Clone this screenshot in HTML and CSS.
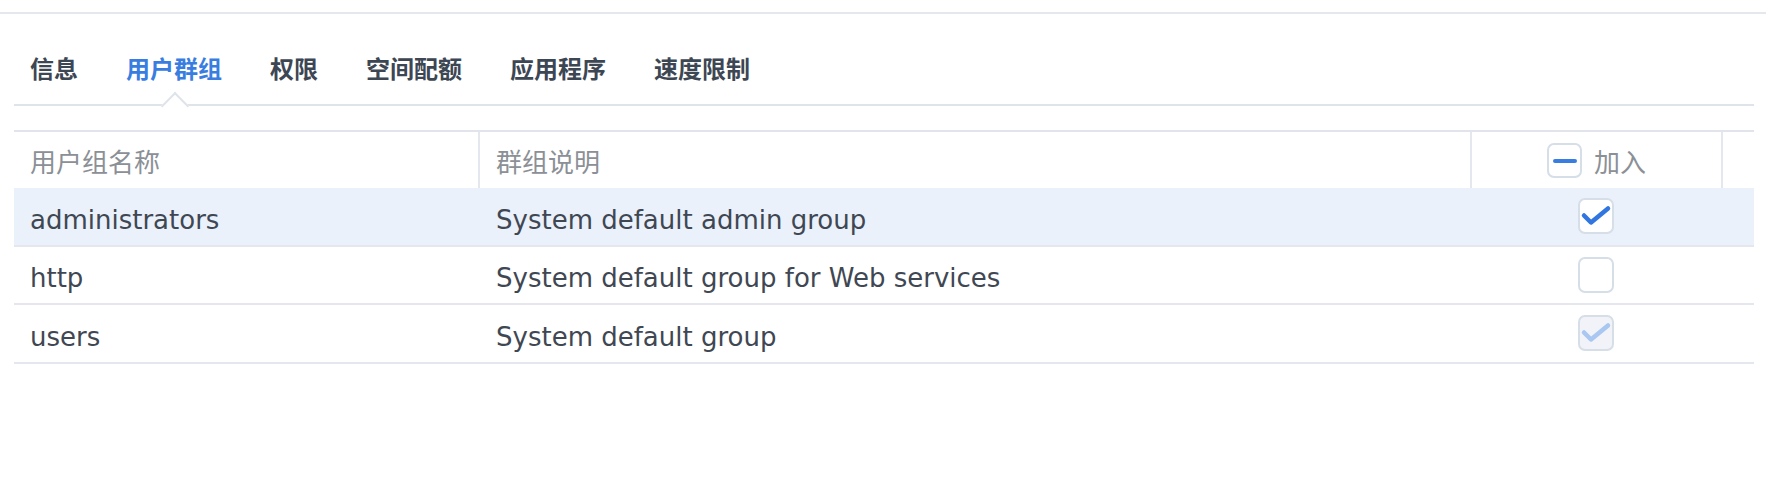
FILE: index.html
```html
<!DOCTYPE html>
<html lang="zh-CN">
<head>
<meta charset="utf-8">
<title>用户群组</title>
<link rel="stylesheet" href="styles.css">
</head>
<body>
<div class="top"></div>
<div class="panel">
  <nav class="tabs">
    <span class="tab">信息</span>
    <span class="tab active">用户群组</span>
    <span class="tab">权限</span>
    <span class="tab">空间配额</span>
    <span class="tab">应用程序</span>
    <span class="tab">速度限制</span>
  </nav>
  <div class="table">
    <div class="row head">
      <div class="cell c1">用户组名称</div>
      <div class="cell c2">群组说明</div>
      <div class="cell c3">
        <span class="cb">
          <svg viewBox="0 0 35 35" width="35" height="35"><line x1="8" y1="18" x2="28" y2="18" class="dash"/></svg>
        </span>
        <span class="join">加入</span>
      </div>
      <div class="cell c4"></div>
    </div>
    <div class="row selected">
      <div class="cell c1 txt">administrators</div>
      <div class="cell c2 txt">System default admin group</div>
      <div class="cell c3">
        <span class="cb">
          <svg viewBox="0 0 36 36" width="36" height="36"><path d="M6 17.5 L13 24.5 L30 10.5" class="check"/></svg>
        </span>
      </div>
      <div class="cell c4"></div>
    </div>
    <div class="row">
      <div class="cell c1 txt">http</div>
      <div class="cell c2 txt">System default group for Web services</div>
      <div class="cell c3"><span class="cb"></span></div>
      <div class="cell c4"></div>
    </div>
    <div class="row">
      <div class="cell c1 txt">users</div>
      <div class="cell c2 txt">System default group</div>
      <div class="cell c3">
        <span class="cb disabled">
          <svg viewBox="0 0 36 36" width="36" height="36"><path d="M6 17.5 L13 24.5 L30 10.5" class="check"/></svg>
        </span>
      </div>
      <div class="cell c4"></div>
    </div>
  </div>
</div>
</body>
</html>
```

FILE: styles.css
```css
* { box-sizing: border-box; }

body {
  margin: 0;
  background: #ffffff;
  font-family: "DejaVu Sans", "Noto Sans CJK SC", sans-serif;
  color: #3f4753;
}

.top {
  height: 14px;
  border-bottom: 2px solid #e4e7ec;
}

.panel {
  padding: 0 12px 0 14px;
}

.tabs {
  display: flex;
  gap: 48px;
  padding: 42px 16px 24px 16px;
  border-bottom: 2px solid #dfe3ea;
  font-family: "Noto Sans CJK SC", sans-serif;
  font-size: 24px;
  line-height: 24px;
  font-weight: 700;
  color: #3d4653;
}

.tab {
  position: relative;
  white-space: nowrap;
}

.tab.active {
  color: #3a7de0;
}

.tab.active::after {
  content: "";
  position: absolute;
  top: 40px;
  left: calc(50% - 9px);
  width: 18px;
  height: 18px;
  background: #ffffff;
  border-top: 2px solid #dfe3ea;
  border-left: 2px solid #dfe3ea;
  transform: rotate(45deg);
}

.table {
  margin-top: 24px;
  border-top: 2px solid #e1e5eb;
}

.row {
  display: grid;
  grid-template-columns: 464px 992px 251px 1fr;
  height: 58.5px;
  border-bottom: 2px solid #e4e8ee;
  font-size: 26px;
}

.row.head {
  height: 56px;
  border-bottom: none;
  color: #8b9096;
  font-family: "Noto Sans CJK SC", sans-serif;
}

.row.selected {
  background: #eaf1fb;
}

.cell {
  display: flex;
  align-items: center;
  white-space: nowrap;
}

.cell.txt {
  padding-top: 7px;
}

.c1 { padding-left: 16px; }
.c2 { padding-left: 18px; }
.c3 { justify-content: center; }

.head .c2,
.head .c3,
.head .c4 {
  border-left: 2px solid #e4e8ee;
}
.head .c2 { padding-left: 16px; }

.cb {
  display: inline-block;
  width: 36px;
  height: 36px;
  border: 2px solid #d6dee8;
  border-radius: 7px;
  background: #ffffff;
  position: relative;
  overflow: hidden;
}

.head .cb {
  width: 35px;
  height: 35px;
}

.cb svg {
  position: absolute;
  left: -2px;
  top: -2px;
}

.cb.disabled {
  background: #f1f3f8;
}

.dash {
  stroke: #3a7de0;
  stroke-width: 4;
  stroke-linecap: round;
}

.check {
  fill: none;
  stroke: #3176e0;
  stroke-width: 4.5;
  stroke-linecap: round;
  stroke-linejoin: round;
}

.cb.disabled .check {
  stroke: #a9c7f1;
}

.join {
  margin-left: 12px;
}
```
